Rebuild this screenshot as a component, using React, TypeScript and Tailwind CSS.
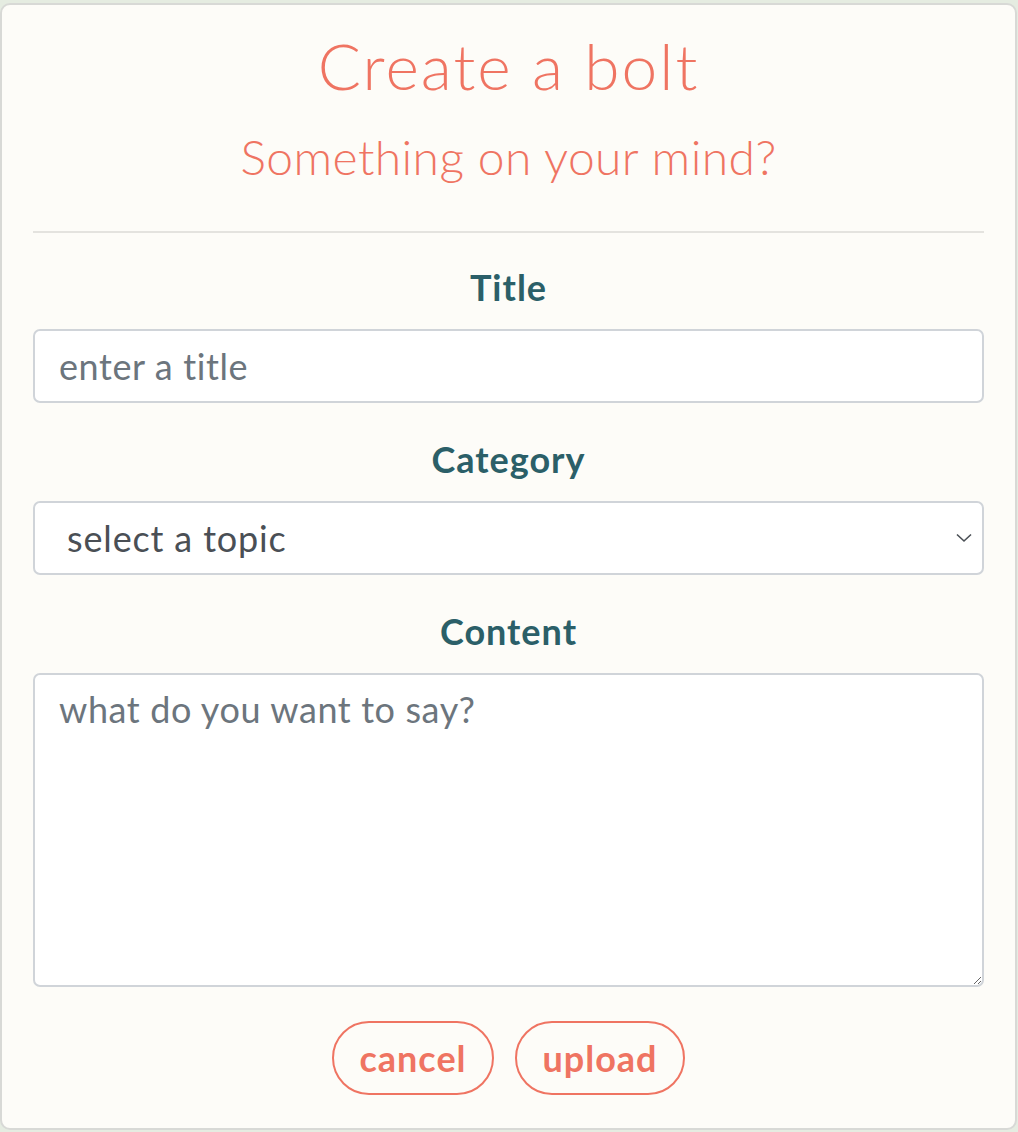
import React from "react";

const font = { fontFamily: "Lato, 'Noto Sans', sans-serif" };

export default function App() {
  return (
    <div className="h-[1132px] w-[1018px] bg-[#e5ece1] pt-[3px] pb-[1px]" style={font}>
      <div className="h-[1127px] w-[1017px] rounded-[10px] border-2 border-[#d8d9d6] bg-[#fdfcf8] px-[31px] pt-[27px]">
        <h1 className="text-center text-[64px] leading-[67px] font-light tracking-[2px] text-[#ef7462]">Create a bolt</h1>
        <h2 className="mt-[34px] text-center text-[48px] leading-[48px] font-light tracking-[0.4px] text-[#ef7462]">Something on your mind?</h2>
        <div className="mt-[50px] h-[2px] bg-[#e4e3df]" />
        <div className="mt-[36px] text-center text-[36px] leading-[36px] font-bold tracking-[1px] text-[#2b5f68]">Title</div>
        <input
          className="mt-[24px] block h-[74px] w-full rounded-[7px] border-2 border-[#d0d4d9] bg-white px-[24px] text-[36px] tracking-[0.6px] text-[#495057] outline-none placeholder:text-[#6c757d]"
          placeholder="enter a title"
        />
        <div className="mt-[38px] text-center text-[36px] leading-[36px] font-bold tracking-[1px] text-[#2b5f68]">Category</div>
        <div className="mt-[24px] flex h-[74px] w-full items-center justify-between rounded-[7px] border-2 border-[#d0d4d9] bg-white pl-[32px] pr-[10px]">
          <span className="text-[36px] tracking-[0.85px] text-[#4a4f55]">select a topic</span>
          <svg width="16" height="10" viewBox="0 0 16 10" fill="none">
            <path d="M1 1.5 L8 8 L15 1.5" stroke="#4a4f55" strokeWidth="1.6" />
          </svg>
        </div>
        <div className="mt-[38px] text-center text-[36px] leading-[36px] font-bold tracking-[1px] text-[#2b5f68]">Content</div>
        <textarea
          className="mt-[24px] block h-[314px] w-full rounded-[7px] border-2 border-[#d0d4d9] bg-white px-[24px] py-[13px] text-[36px] leading-[42px] tracking-[0.6px] text-[#495057] outline-none placeholder:text-[#6c757d]"
          placeholder="what do you want to say?"
        />
        <div className="mt-[34px] flex justify-center gap-[21px]">
          <button className="h-[74px] w-[162px] rounded-full border-2 border-[#ef7462] text-[36px] font-bold tracking-[1px] text-[#ef7462]">cancel</button>
          <button className="h-[74px] w-[170px] rounded-full border-2 border-[#ef7462] text-[36px] font-bold tracking-[1px] text-[#ef7462]">upload</button>
        </div>
      </div>
    </div>
  );
}
